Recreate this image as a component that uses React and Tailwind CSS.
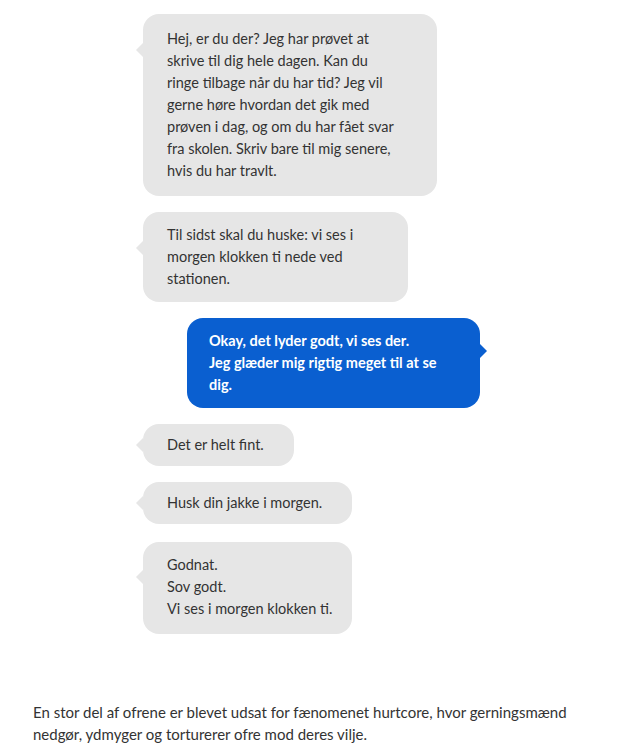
import React from "react";

const font = { fontFamily: "Lato, 'Open Sans', sans-serif" };

function Bubble({ lines, width, tail = 36, py = "py-[12px]", mine = false, extra = "" }) {
  return (
    <div
      className={`relative rounded-[16px] px-6 ${py} text-[14.5px] leading-[22px] ${
        mine ? "bg-[#0a5fd0] text-white font-bold self-end" : "bg-[#e6e6e6] text-[#333]"
      } ${width} ${extra}`}
    >
      {mine ? (
        <span
          className="absolute -right-[7px] w-0 h-0 border-y-[7px] border-y-transparent border-l-[7px] border-l-[#0a5fd0]"
          style={{ top: tail - 7 }}
        />
      ) : (
        <span
          className="absolute -left-[7px] w-0 h-0 border-y-[7px] border-y-transparent border-r-[7px] border-r-[#e6e6e6]"
          style={{ top: tail - 7 }}
        />
      )}
      {lines.map((l, i) => (
        <div key={i} className="whitespace-nowrap">{l}</div>
      ))}
    </div>
  );
}

export default function App() {
  return (
    <div className="min-h-screen bg-white" style={font}>
      <div className="flex flex-col items-start gap-4 pt-[14px] pl-[143px] pr-[146px]">
        <Bubble
          width="w-[294px]"
          py="py-[14px]"
          lines={[
            "Hej, er du der? Jeg har prøvet at",
            "skrive til dig hele dagen. Kan du",
            "ringe tilbage når du har tid? Jeg vil",
            "gerne høre hvordan det gik med",
            "prøven i dag, og om du har fået svar",
            "fra skolen. Skriv bare til mig senere,",
            "hvis du har travlt.",
          ]}
        />
        <Bubble
          width="w-[265px]"
          lines={["Til sidst skal du huske: vi ses i", "morgen klokken ti nede ved", "stationen."]}
        />
        <Bubble
          mine
          width="w-[293px]"
          tail={33}
          extra="pl-[22px]"
          lines={["Okay, det lyder godt, vi ses der.", "Jeg glæder mig rigtig meget til at se", "dig."]}
        />
        <Bubble width="w-[151px]" py="py-[10px]" tail={21} lines={["Det er helt fint."]} />
        <Bubble width="w-[209px]" py="py-[10px]" tail={21} lines={["Husk din jakke i morgen."]} />
        <Bubble
          width="w-[209px]"
          tail={35}
          extra="mt-[2px] pb-[14px]"
          lines={["Godnat.", "Sov godt.", "Vi ses i morgen klokken ti."]}
        />
      </div>
      <p className="mt-[67px] px-[33px] text-[15px] leading-[22px] text-[#333]">
        En stor del af ofrene er blevet udsat for fænomenet hurtcore, hvor gerningsmænd
        <br />
        nedgør, ydmyger og torturerer ofre mod deres vilje.
      </p>
    </div>
  );
}
